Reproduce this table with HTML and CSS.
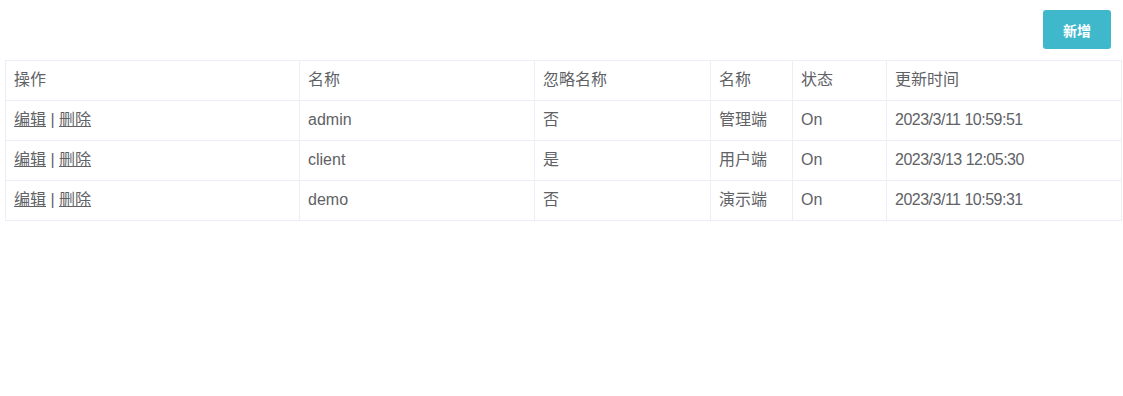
FILE: index.html
```html
<!DOCTYPE html>
<html lang="zh-CN">
<head>
    <meta charset="UTF-8">
    <meta name="viewport" content="width=device-width, initial-scale=1.0">
    <title>客户端列表</title>
    <link rel="stylesheet" href="styles.css">
</head>
<body>
    <div class="toolbar">
        <button class="btn-add">新增</button>
    </div>
    <table class="grid">
        <colgroup>
            <col style="width: 294px">
            <col style="width: 235px">
            <col style="width: 176px">
            <col style="width: 82px">
            <col style="width: 94px">
            <col>
        </colgroup>
        <tr>
            <th>操作</th>
            <th>名称</th>
            <th>忽略名称</th>
            <th>名称</th>
            <th>状态</th>
            <th>更新时间</th>
        </tr>
        <tr>
            <td><a href="#">编辑</a> | <a href="#">删除</a></td>
            <td>admin</td>
            <td>否</td>
            <td>管理端</td>
            <td>On</td>
            <td class="time">2023/3/11 10:59:51</td>
        </tr>
        <tr>
            <td><a href="#">编辑</a> | <a href="#">删除</a></td>
            <td>client</td>
            <td>是</td>
            <td>用户端</td>
            <td>On</td>
            <td class="time">2023/3/13 12:05:30</td>
        </tr>
        <tr>
            <td><a href="#">编辑</a> | <a href="#">删除</a></td>
            <td>demo</td>
            <td>否</td>
            <td>演示端</td>
            <td>On</td>
            <td class="time">2023/3/11 10:59:31</td>
        </tr>
    </table>
</body>
</html>
```

FILE: styles.css
```css
body {
    margin: 0;
    padding: 10px 1px 10px 5px;
    font-family: "Liberation Sans", "Noto Sans CJK SC", sans-serif;
    font-size: 16px;
    color: #606266;
    background: #fff;
}
.toolbar {
    display: flex;
    justify-content: flex-end;
    padding-right: 11px;
    margin-bottom: 11px;
}
.btn-add {
    width: 68px;
    height: 39px;
    border: none;
    border-radius: 3px;
    background: #40b8cc;
    color: #fff;
    font-family: inherit;
    font-size: 14px;
    font-weight: bold;
    cursor: pointer;
}
.grid {
    width: 100%;
    border-collapse: collapse;
    table-layout: fixed;
}
.grid th,
.grid td {
    height: 20px;
    line-height: 20px;
    padding: 9px 8px 10px;
    border: 1px solid #ebeef5;
    text-align: left;
    font-weight: normal;
    white-space: nowrap;
}
.grid .time {
    letter-spacing: -0.5px;
}
.grid a {
    color: #606266;
    text-decoration: underline;
}
```
